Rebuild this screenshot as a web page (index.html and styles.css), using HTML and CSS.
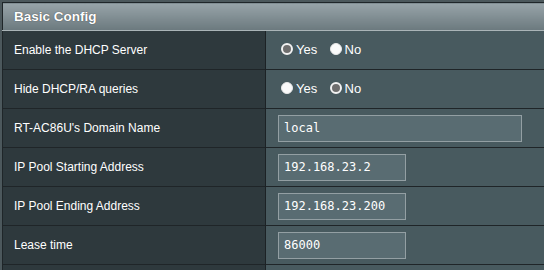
FILE: index.html
```html
<!DOCTYPE html>
<html lang="en">
<head>
  <meta charset="UTF-8" />
  <title>DHCP Server</title>
  <link rel="stylesheet" href="styles.css">
</head>
<body>
  <div class="frame">
    <table class="config">
      <thead>
        <tr><th colspan="2">Basic Config</th></tr>
      </thead>
      <tbody>
        <tr>
          <td class="name">Enable the DHCP Server</td>
          <td class="value">
            <label class="radio"><input type="radio" name="dhcp" checked />Yes</label>
            <label class="radio"><input type="radio" name="dhcp" />No</label>
          </td>
        </tr>
        <tr>
          <td class="name">Hide DHCP/RA queries</td>
          <td class="value">
            <label class="radio"><input type="radio" name="hide" />Yes</label>
            <label class="radio"><input type="radio" name="hide" checked />No</label>
          </td>
        </tr>
        <tr>
          <td class="name">RT-AC86U's Domain Name</td>
          <td class="value"><input type="text" class="field wide" value="local" /></td>
        </tr>
        <tr>
          <td class="name">IP Pool Starting Address</td>
          <td class="value"><input type="text" class="field" value="192.168.23.2" /></td>
        </tr>
        <tr>
          <td class="name">IP Pool Ending Address</td>
          <td class="value"><input type="text" class="field" value="192.168.23.200" /></td>
        </tr>
        <tr>
          <td class="name">Lease time</td>
          <td class="value"><input type="text" class="field" value="86000" /></td>
        </tr>
        <tr>
          <td class="name">&nbsp;</td>
          <td class="value"></td>
        </tr>
      </tbody>
    </table>
  </div>
</body>
</html>
```

FILE: styles.css
```css
body { margin: 0; background: #4c585c; font-family: "Liberation Sans", Arial, sans-serif; color: #fff; overflow: hidden; }
.frame { padding: 2px 0 0 2px; }
.config { border-collapse: collapse; width: 780px; border: 1px solid #1f2629; }
.config th {
  height: 27px; padding: 0 0 0 11px; text-align: left;
  font-size: 13.5px; font-weight: bold; color: #fff;
  text-shadow: 0 0 1px #333;
  background: linear-gradient(#98a4a9, #6b797e);
  border-bottom: 1px solid #aab4b7;
}
.config td { height: 38px; padding: 0; border-top: 1px solid #1f2528; font-size: 12px; }
.name { width: 251px; padding-left: 11px !important; background: #2e393d; border-right: 1px solid #1c2225; }
.value { background: #485a5f; padding-left: 12px !important; }
.radio { display: inline-flex; align-items: center; margin-right: 6px; font-size: 13px; }
.radio input {
  appearance: none; -webkit-appearance: none; margin: 0 3px 0 3px;
  width: 12px; height: 12px; border-radius: 50%; box-sizing: border-box;
  background: #fafafa; border: 1px solid #e8e8e8;
}
.radio input:checked { background: #6e6e6e; border: 2px solid #f2f2f2; }
.field {
  display: block; box-sizing: border-box; height: 27px; width: 128px;
  background: #596c72; border: 1px solid #939fa3; color: #fff;
  font-family: "DejaVu Sans Mono", monospace; font-size: 12px;
  padding: 0 0 0 5px; margin: 0;
}
.wide { width: 244px; }
```
